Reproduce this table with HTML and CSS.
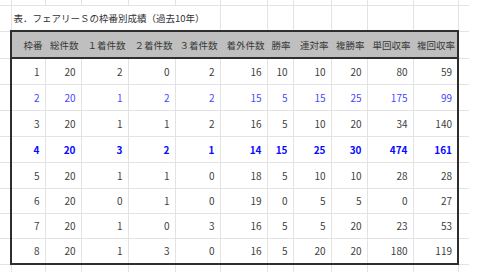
FILE: index.html
```html
<!DOCTYPE html>
<html lang="ja">
<head>
<meta charset="utf-8">
<title>表．フェアリーＳの枠番別成績</title>
<link rel="stylesheet" href="styles.css">
</head>
<body>
<table class="sheet">
<colgroup>
<col class="c-a"><col class="c-b"><col class="c-c"><col class="c-d"><col class="c-e"><col class="c-f"><col class="c-g"><col class="c-h"><col class="c-i"><col class="c-j"><col class="c-k"><col class="c-l"><col class="c-m">
</colgroup>
<tbody>
<tr class="r-top"><td class="first"></td><td></td><td></td><td></td><td></td><td></td><td></td><td></td><td></td><td></td><td></td><td></td><td class="last"></td></tr>
<tr class="r-title"><td class="first"></td><td class="title" colspan="5">表．フェアリーＳの枠番別成績（過去10年）</td><td></td><td></td><td></td><td></td><td></td><td></td><td class="last"></td></tr>
<tr class="r-head"><td class="first"></td><th class="hl">枠番</th><th>総件数</th><th>１着件数</th><th>２着件数</th><th>３着件数</th><th>着外件数</th><th>勝率</th><th>連対率</th><th>複勝率</th><th>単回収率</th><th class="hr">複回収率</th><td class="last"></td></tr>
<tr class="r-data"><td class="first"></td><td class="nl">1</td><td>20</td><td>2</td><td>0</td><td>2</td><td>16</td><td>10</td><td>10</td><td>20</td><td>80</td><td class="nr">59</td><td class="last"></td></tr>
<tr class="r-data blue"><td class="first"></td><td class="nl">2</td><td>20</td><td>1</td><td>2</td><td>2</td><td>15</td><td>5</td><td>15</td><td>25</td><td>175</td><td class="nr">99</td><td class="last"></td></tr>
<tr class="r-data"><td class="first"></td><td class="nl">3</td><td>20</td><td>1</td><td>1</td><td>2</td><td>16</td><td>5</td><td>10</td><td>20</td><td>34</td><td class="nr">140</td><td class="last"></td></tr>
<tr class="r-data bold"><td class="first"></td><td class="nl">4</td><td>20</td><td>3</td><td>2</td><td>1</td><td>14</td><td>15</td><td>25</td><td>30</td><td>474</td><td class="nr">161</td><td class="last"></td></tr>
<tr class="r-data"><td class="first"></td><td class="nl">5</td><td>20</td><td>1</td><td>1</td><td>0</td><td>18</td><td>5</td><td>10</td><td>10</td><td>28</td><td class="nr">28</td><td class="last"></td></tr>
<tr class="r-data short"><td class="first"></td><td class="nl">6</td><td>20</td><td>0</td><td>1</td><td>0</td><td>19</td><td>0</td><td>5</td><td>5</td><td>0</td><td class="nr">27</td><td class="last"></td></tr>
<tr class="r-data short"><td class="first"></td><td class="nl">7</td><td>20</td><td>1</td><td>0</td><td>3</td><td>16</td><td>5</td><td>5</td><td>20</td><td>23</td><td class="nr">53</td><td class="last"></td></tr>
<tr class="r-data short end"><td class="first"></td><td class="nl">8</td><td>20</td><td>1</td><td>3</td><td>0</td><td>16</td><td>5</td><td>20</td><td>20</td><td>180</td><td class="nr">119</td><td class="last"></td></tr>
<tr class="r-bottom"><td class="first"></td><td></td><td></td><td></td><td></td><td></td><td></td><td></td><td></td><td></td><td></td><td></td><td class="last"></td></tr>
</tbody>
</table>
</body>
</html>
```

FILE: styles.css
```css
html, body {
  margin: 0;
  padding: 0;
  background: #ffffff;
}

body {
  width: 480px;
  height: 272px;
  overflow: hidden;
  font-family: "Noto Sans CJK JP", "Noto Sans", sans-serif;
}

.sheet {
  border-collapse: collapse;
  table-layout: fixed;
  width: 469px;
}

.c-a { width: 11px; }
.c-b { width: 34px; }
.c-c { width: 36px; }
.c-d { width: 47px; }
.c-e { width: 47px; }
.c-f { width: 45px; }
.c-g { width: 47px; }
.c-h { width: 26px; }
.c-i { width: 38px; }
.c-j { width: 36px; }
.c-k { width: 46px; }
.c-l { width: 45px; }
.c-m { width: 11px; }

.sheet td,
.sheet th {
  border: 1px solid #e3e3e3;
  padding: 0;
  font-size: 10px;
  line-height: 12px;
  color: #404040;
  white-space: nowrap;
  overflow: visible;
}

.sheet .first { border-left: none; }
.sheet .last { border-right: none; }
.r-top td { border-top: none; height: 5px; }

.r-title td { height: 24px; }
.sheet .title {
  text-align: left;
  padding-left: 2px;
  font-size: 9.5px;
  color: #333333;
}

.r-head td,
.r-head th { height: 25px; }
.sheet th {
  background: #bfbfbf;
  font-weight: normal;
  font-size: 9.5px;
  color: #383838;
  text-align: right;
  padding-right: 2px;
  border-color: #bfbfbf;
  border-top: 2px solid #2e2e2e;
  border-bottom: 2px solid #2e2e2e;
}
.sheet th.hl { border-left: 2px solid #2e2e2e; }
.sheet th.hr { border-right: 2px solid #2e2e2e; }

.r-data td {
  height: 25px;
  text-align: right;
  padding-right: 5px;
}
.r-data.short td { height: 24px; }
.sheet .nl { border-left: 2px solid #2e2e2e; }
.sheet .nr { border-right: 2px solid #2e2e2e; }
.r-data.end td:not(.first):not(.last) { border-bottom: 2px solid #2e2e2e; }

.r-data.blue td { color: #4646ff; }
.r-data.bold td {
  color: #0a0aff;
  font-weight: bold;
}

.r-bottom td {
  height: 8px;
  border-bottom: none;
}
```
